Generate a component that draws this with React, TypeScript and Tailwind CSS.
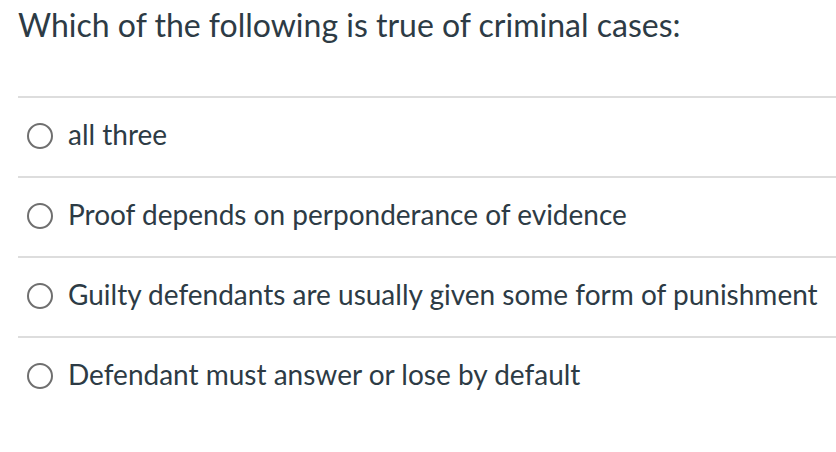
import React from 'react';

const answers = [
  'all three',
  'Proof depends on perponderance of evidence',
  'Guilty defendants are usually given some form of punishment',
  'Defendant must answer or lose by default',
];

export default function App() {
  return (
    <div className="w-[836px] h-[452px] bg-white text-[#2d3b45] font-['Lato','Noto_Sans',sans-serif] overflow-hidden">
      <div className="pl-[18px] pt-[5px]">
        <h1 className="text-[32px] leading-[40px] font-normal">Which of the following is true of criminal cases:</h1>
        <div className="mt-[51px]">
          {answers.map(a => (
            <div key={a} className="border-t-2 border-[#dddddd] h-[80px] flex items-center">
              <span className="ml-[9px] mb-[2px] w-[26px] h-[26px] rounded-full border-2 border-[#6f6f6f] shrink-0" />
              <span className="ml-[15px] text-[28px] leading-[32px] mb-[6px]">{a}</span>
            </div>
          ))}
        </div>
      </div>
    </div>
  );
}
